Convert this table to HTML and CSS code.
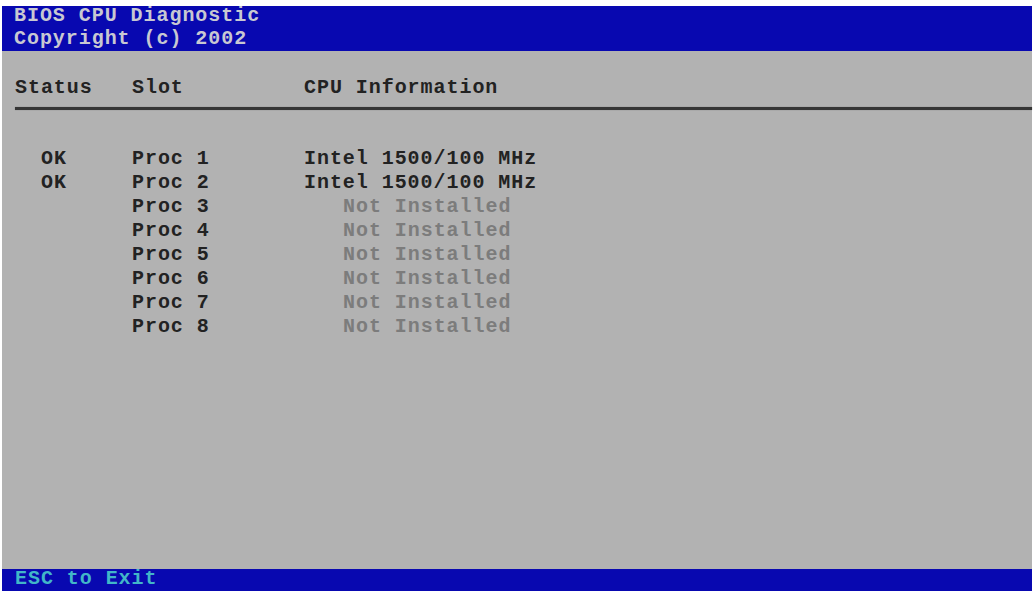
FILE: index.html
```html
<!DOCTYPE html>
<html lang="en">
<head>
    <meta charset="UTF-8">
    <meta name="viewport" content="width=device-width, initial-scale=1.0">
    <title>BIOS CPU Diagnostic</title>
    <link rel="stylesheet" href="styles.css">
</head>
<body>

<div class="screen">
    <div class="titlebar">
        <div class="title-text">
            <div>BIOS CPU Diagnostic</div>
            <div>Copyright (c) 2002</div>
        </div>
    </div>

    <div class="main">
        <div class="grid heading">
            <div>Status</div>
            <div>Slot</div>
            <div>CPU Information</div>
        </div>
        <div class="rule"></div>

        <div class="grid rows">
            <div class="status">OK</div><div>Proc 1</div><div>Intel 1500/100 MHz</div>
            <div class="status">OK</div><div>Proc 2</div><div>Intel 1500/100 MHz</div>
            <div class="status"></div><div>Proc 3</div><div class="empty">Not Installed</div>
            <div class="status"></div><div>Proc 4</div><div class="empty">Not Installed</div>
            <div class="status"></div><div>Proc 5</div><div class="empty">Not Installed</div>
            <div class="status"></div><div>Proc 6</div><div class="empty">Not Installed</div>
            <div class="status"></div><div>Proc 7</div><div class="empty">Not Installed</div>
            <div class="status"></div><div>Proc 8</div><div class="empty">Not Installed</div>
        </div>
    </div>

    <div class="footer">ESC to Exit</div>
</div>

</body>
</html>
```

FILE: styles.css
```css
body {
    margin: 0;
    padding: 6px 4px 0 2px;
    background-color: #ffffff;
    font-family: "Liberation Mono", "DejaVu Sans Mono", monospace;
    font-weight: bold;
    font-size: 20px;
    letter-spacing: 0.95px;
}
.screen {
    height: 585px;
    display: flex;
    flex-direction: column;
    background-color: #b2b2b2;
}
.titlebar {
    height: 45px;
    background-color: #0808b0;
    color: #c8c8d2;
    padding-left: 12px;
    line-height: 23px;
}
.title-text {
    margin-top: -2px;
}
.main {
    flex: 1;
    padding: 25px 0 0 13px;
    color: #222222;
}
.grid {
    display: grid;
    grid-template-columns: 117px 172px 1fr;
    line-height: 24px;
}
.rule {
    height: 3px;
    margin-top: 7px;
    background-color: #363636;
    box-shadow: 0 0 1px #5a5a5a;
}
.rows {
    margin-top: 37px;
}
.status {
    padding-left: 26px;
}
.empty {
    padding-left: 39px;
    color: #7c7c7c;
}
.footer {
    height: 22px;
    line-height: 20px;
    padding-left: 13px;
    background-color: #0808b0;
    color: #42b6c8;
}
```
